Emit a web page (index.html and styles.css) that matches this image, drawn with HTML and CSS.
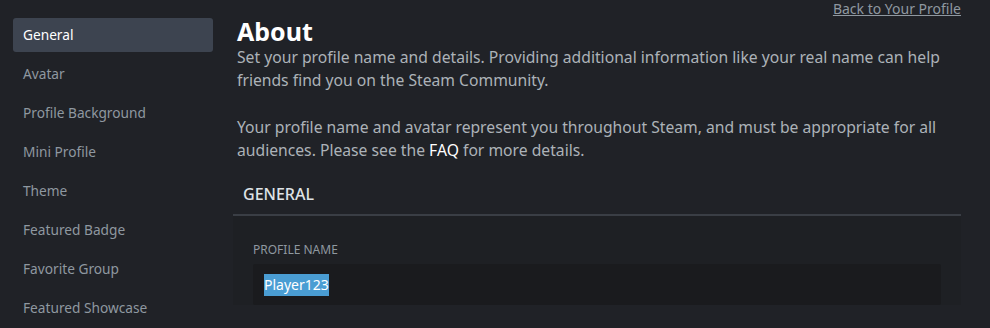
FILE: index.html
```html
<!DOCTYPE html>
<html>
<head>
<meta charset="utf-8">
<link rel="stylesheet" href="styles.css">
</head>
<body>
<div class="page">
  <nav class="sidebar">
    <a class="nav-item active">General</a>
    <a class="nav-item">Avatar</a>
    <a class="nav-item">Profile Background</a>
    <a class="nav-item">Mini Profile</a>
    <a class="nav-item">Theme</a>
    <a class="nav-item">Featured Badge</a>
    <a class="nav-item">Favorite Group</a>
    <a class="nav-item">Featured Showcase</a>
  </nav>
  <main class="main">
    <div class="topbar"><a class="back-link">Back to Your Profile</a></div>
    <div class="about">
      <h1 class="title">About</h1>
      <p class="desc">Set your profile name and details. Providing additional information like your real name can help friends find you on the Steam Community.</p>
      <p class="desc">Your profile name and avatar represent you throughout Steam, and must be appropriate for all audiences. Please see the <a class="faq">FAQ</a> for more details.</p>
    </div>
    <div class="section-head">GENERAL</div>
    <div class="section-body">
      <div class="field-label">PROFILE NAME</div>
      <div class="input"><span class="selected">Player123</span></div>
    </div>
  </main>
</div>
</body>
</html>
```
FILE: styles.css
```css
html, body {
  margin: 0;
  padding: 0;
  background: #202227;
  height: 100%;
  overflow: hidden;
}
body {
  font-family: "Noto Sans", "Open Sans", sans-serif;
  color: #acb2b8;
}
.page {
  display: flex;
  gap: 20px;
  padding-left: 13px;
}
.sidebar {
  width: 200px;
  flex: none;
  padding-top: 18px;
  display: flex;
  flex-direction: column;
}
.nav-item {
  display: block;
  height: 34px;
  line-height: 34px;
  margin-bottom: 5px;
  padding-left: 10px;
  font-size: 13.7px;
  color: #8f98a0;
  border-radius: 3px;
}
.nav-item.active {
  background: #3d4450;
  color: #ffffff;
}
.main {
  width: 728px;
  flex: none;
}
.topbar {
  display: flex;
  justify-content: flex-end;
  height: 17px;
}
.back-link {
  font-size: 14px;
  line-height: 17px;
  color: #8f98a0;
  text-decoration: underline;
}
.about {
  padding-left: 4px;
}
.title {
  margin: 0;
  font-size: 25px;
  line-height: 29px;
  font-weight: 700;
  color: #ffffff;
}
.desc {
  margin: 0 0 25px 0;
  font-size: 15.7px;
  line-height: 22.5px;
  color: #acb2b8;
}
.desc:last-child {
  margin-bottom: 0;
}
.faq {
  color: #ffffff;
}
.section-head {
  margin-top: 14px;
  padding: 0 10px;
  height: 39px;
  line-height: 39px;
  font-size: 16px;
  font-weight: 500;
  color: #dfe3e6;
  border-bottom: 2px solid #3a3e45;
}
.section-body {
  padding: 26px 20px 0 20px;
  background: #1e2024;
}
.field-label {
  font-size: 12px;
  line-height: 16px;
  color: #8f98a0;
  margin-bottom: 6px;
}
.input {
  height: 41px;
  background: #1a1b1e;
  border-radius: 2px;
  display: flex;
  align-items: center;
  padding-left: 11px;
}
.selected {
  background: #4a9dd3;
  color: #ffffff;
  font-size: 14px;
  line-height: 22px;
}
```
